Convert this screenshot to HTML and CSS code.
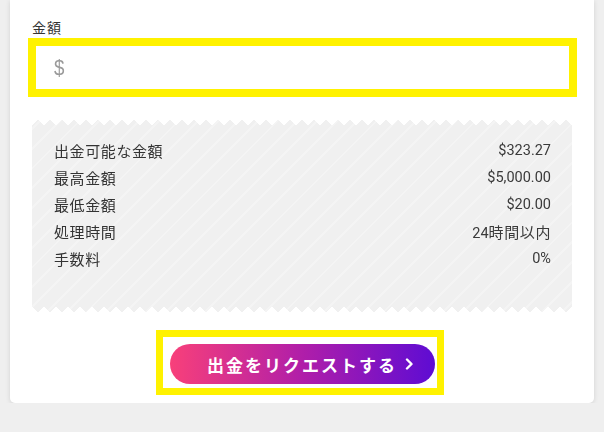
FILE: index.html
```html
<!DOCTYPE html>
<html lang="ja">
<head>
<meta charset="utf-8">
<title>出金</title>
<link rel="stylesheet" href="styles.css">
</head>
<body>
<div class="card">
  <div class="label">金額</div>
  <div class="input-hl">
    <div class="input"><span class="currency">$</span></div>
  </div>
  <div class="receipt">
    <div class="row"><span class="k">出金可能な金額</span><span class="v">$323.27</span></div>
    <div class="row"><span class="k">最高金額</span><span class="v">$5,000.00</span></div>
    <div class="row"><span class="k">最低金額</span><span class="v">$20.00</span></div>
    <div class="row"><span class="k">処理時間</span><span class="v">24<span class="vj">時間以内</span></span></div>
    <div class="row"><span class="k">手数料</span><span class="v">0%</span></div>
  </div>
  <div class="btn-row">
    <div class="btn-hl">
      <button class="btn">出金をリクエストする<svg class="chev" width="9" height="12" viewBox="0 0 9 12"><path d="M2 1.5 L6.5 6 L2 10.5" fill="none" stroke="#fff" stroke-width="2.4" stroke-linecap="round" stroke-linejoin="round"/></svg></button>
    </div>
  </div>
</div>
</body>
</html>
```
FILE: styles.css
```css
html, body {
  margin: 0;
  padding: 0;
  background: #efefef;
  font-family: "Noto Sans CJK JP", "Noto Sans", sans-serif;
  color: #333;
}
.card {
  margin: 0 10px;
  width: 584px;
  height: 403px;
  box-sizing: border-box;
  background: #fff;
  border-radius: 0 0 5px 5px;
  box-shadow: 0 1px 5px rgba(0,0,0,0.12);
  padding: 17px 22px 0 22px;
}
.label {
  font-size: 14px;
  line-height: 21px;
  letter-spacing: 1px;
  color: #333;
}
.input-hl {
  margin: 0 -5px 0 -4px;
  border: 8px solid #fff200;
  background: #fff;
  height: 43px;
  display: flex;
  align-items: center;
}
.input {
  padding-left: 17px;
  display: flex;
  align-items: center;
}
.currency {
  font-family: "Liberation Sans", sans-serif;
  font-size: 22px;
  font-weight: 400;
  color: #9a9a9a;
  line-height: 24px;
  transform: scaleX(0.85);
}
.receipt {
  margin-top: 22px;
  height: 194px;
  box-sizing: border-box;
  padding: 18px 21px 0 22px;
  background:
    repeating-linear-gradient(-45deg, #f0f0f0 0 7px, #f4f4f4 7px 9px, #f0f0f0 9px 14px);
  -webkit-mask:
    conic-gradient(from -45deg at bottom, #0000, #000 1deg 89deg, #0000 90deg) bottom / 12px 51% repeat-x,
    conic-gradient(from 135deg at top, #0000, #000 1deg 89deg, #0000 90deg) top / 12px 51% repeat-x;
  mask:
    conic-gradient(from -45deg at bottom, #0000, #000 1deg 89deg, #0000 90deg) bottom / 12px 51% repeat-x,
    conic-gradient(from 135deg at top, #0000, #000 1deg 89deg, #0000 90deg) top / 12px 51% repeat-x;
}
.row {
  display: flex;
  justify-content: space-between;
  align-items: center;
  height: 27px;
  font-size: 15px;
  letter-spacing: 0.6px;
}
.k { color: #333; }
.v {
  font-family: "Roboto", "Noto Sans CJK JP", sans-serif;
  font-size: 14.5px;
  color: #3a3a3a;
  letter-spacing: 0;
}
.vj {
  font-family: "Noto Sans CJK JP", sans-serif;
  font-size: 15px;
  letter-spacing: 0.6px;
}
.btn-row {
  margin-top: 17px;
  display: flex;
  justify-content: center;
  padding-right: 4px;
}
.btn-hl {
  border: 7px solid #fff200;
  background: #fff;
  padding: 7px 2px 4px 7px;
  display: flex;
}
.btn {
  width: 265px;
  height: 40px;
  border: 0;
  border-radius: 20px;
  background: linear-gradient(90deg, #f8407a 0%, #b01ea9 50%, #5e0cd3 100%);
  color: #fff;
  font-family: "Noto Sans CJK JP", sans-serif;
  font-weight: 700;
  font-size: 17px;
  letter-spacing: 2px;
  display: flex;
  align-items: center;
  justify-content: center;
  padding: 0 0 0 16px;
  gap: 8px;
}
.chev { display: block; }
```
